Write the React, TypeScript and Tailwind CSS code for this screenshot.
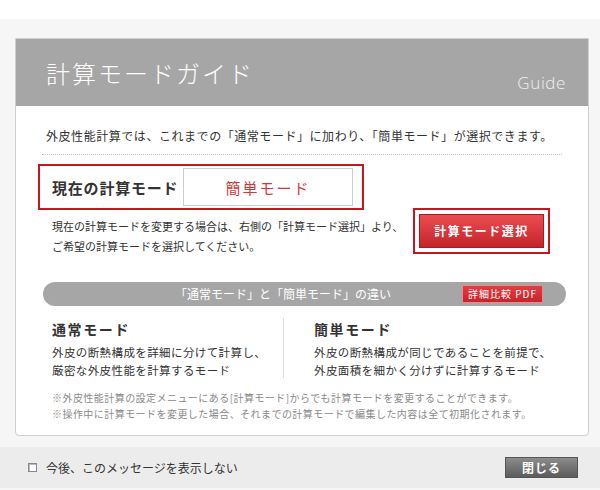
import React from "react";

const JP = { fontFamily: '"Noto Sans CJK JP", "Noto Sans", sans-serif' };

export default function App() {
  return (
    <div
      className="w-[600px] h-[490px] bg-[#f6f6f6] flex flex-col text-[#333]"
      style={JP}
    >
      <div className="h-[19px] bg-white shrink-0" />
      <div className="pt-[19px] pl-[15px] pr-[11px] shrink-0">
        <div className="border border-[#cfcfcf] rounded-b-[4px] bg-white overflow-hidden">
          {/* header */}
          <div className="h-[67px] bg-[#a6a6a6] flex justify-between pl-[30px] pr-[22px]">
            <div className="pt-[22px] text-[24px] leading-[24px] tracking-[2px] font-light text-white">
              計算モードガイド
            </div>
            <div
              className="self-end pb-[15px] text-[17px] leading-[17px] tracking-[0.6px] font-light text-[#f0f0f0]"
              style={{ fontFamily: '"Open Sans", "Noto Sans", sans-serif' }}
            >
              Guide
            </div>
          </div>
          {/* body */}
          <div className="px-[22px] pt-[22px] pb-[13px]">
            <p className="pl-[8px] text-[12px] leading-[16px] tracking-[0.55px]">
              外皮性能計算では、これまでの「通常モード」に加わり、「簡単モード」が選択できます。
            </p>
            <div className="mx-[4px] mt-[10px] border-t border-dotted border-[#c4c4c4]" />
            <div className="flex justify-between mt-[9px]">
              <div>
                <div className="w-[326px] h-[46px] border-2 border-[#c8161e] flex items-center pl-[12px] pr-[9px]">
                  <span className="text-[15px] font-bold tracking-[0.8px] text-[#333] leading-none">
                    現在の計算モード
                  </span>
                  <div className="ml-auto w-[170px] h-[38px] border border-[#cccccc] bg-white flex items-center justify-center text-[15px] tracking-[2px] text-[#d6373c] leading-none">
                    簡単モード
                  </div>
                </div>
                <p className="mt-[6px] pl-[14px] text-[11px] leading-[20px] text-[#333]">
                  現在の計算モードを変更する場合は、右側の「計算モード選択」より、
                  <br />
                  ご希望の計算モードを選択してください。
                </p>
              </div>
              <div className="self-end mb-[2px] mr-[16px] border-2 border-[#c8161e] p-[4px] bg-white">
                <button className="w-[125px] h-[34px] border border-[#a51a20] bg-gradient-to-b from-[#ea4c50] to-[#c5222a] text-white text-[12px] font-bold tracking-[1.5px] flex items-center justify-center">
                  計算モード選択
                </button>
              </div>
            </div>
            {/* bar */}
            <div className="mt-[26px] ml-[5px] h-[24px] rounded-full bg-[#a6a6a6] flex items-center">
              <span className="ml-[132px] text-[12px] text-white leading-none">
                「通常モード」と「簡単モード」の違い
              </span>
              <span className="ml-auto mr-[23px] w-[81px] h-[18px] border border-[#e98a8c] bg-gradient-to-b from-[#e33c40] to-[#c8232a] text-white text-[10px] tracking-[1px] flex items-center justify-center leading-none">
                詳細比較 PDF
              </span>
            </div>
            {/* columns */}
            <div className="mt-[13px] flex">
              <div className="pl-[14px] w-[245px]">
                <div className="text-[14px] leading-[20px] font-bold tracking-[1.6px]">
                  通常モード
                </div>
                <p className="mt-[4px] text-[11.5px] leading-[18px] tracking-[0.4px]">
                  外皮の断熱構成を詳細に分けて計算し、
                  <br />
                  厳密な外皮性能を計算するモード
                </p>
              </div>
              <div className="w-px bg-[#dddddd] mt-[-1px] mb-[1px]" />
              <div className="pl-[30px]">
                <div className="text-[14px] leading-[20px] font-bold tracking-[1.6px]">
                  簡単モード
                </div>
                <p className="mt-[4px] text-[11.5px] leading-[18px] tracking-[0.4px]">
                  外皮の断熱構成が同じであることを前提で、
                  <br />
                  外皮面積を細かく分けずに計算するモード
                </p>
              </div>
            </div>
            <p className="mt-[11px] pl-[14px] text-[10px] leading-[16px] tracking-[0.45px] text-[#8a8a8a]">
              ※外皮性能計算の設定メニューにある[計算モード]からでも計算モードを変更することができます。
              <br />
              ※操作中に計算モードを変更した場合、それまでの計算モードで編集した内容は全て初期化されます。
            </p>
          </div>
        </div>
      </div>
      {/* footer */}
      <div className="mt-[11px] h-[41px] bg-[#ececec] flex items-center pl-[28px] pr-[22px] shrink-0">
        <span className="w-[9px] h-[9px] border border-[#888] bg-white shadow-[inset_1px_1px_0_#bbb]" />
        <span className="ml-[9px] text-[12px] text-[#333] leading-none">
          今後、このメッセージを表示しない
        </span>
        <button className="ml-auto w-[73px] h-[21px] border border-[#555] bg-gradient-to-b from-[#8c8c8c] to-[#5c5c5c] text-white text-[12px] font-bold tracking-[1px] flex items-center justify-center">
          閉じる
        </button>
      </div>
    </div>
  );
}
